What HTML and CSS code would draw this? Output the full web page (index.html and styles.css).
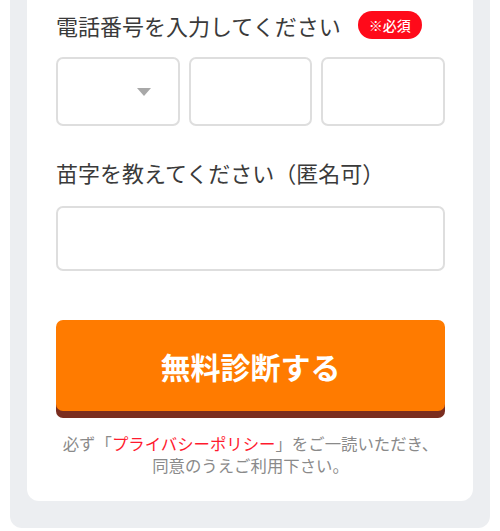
FILE: index.html
```html
<!DOCTYPE html>
<html lang="ja">
<head>
    <meta charset="UTF-8">
    <title>無料診断</title>
    <link rel="stylesheet" href="styles.css">
</head>
<body>
<div class="panel">
    <form class="card">
        <div class="label">
            <span>電話番号を入力してください</span>
            <em class="must">※必須</em>
        </div>
        <div class="tel">
            <div class="field select"><i class="arrow"></i></div>
            <div class="field"></div>
            <div class="field"></div>
        </div>

        <div class="label label-2">
            <span>苗字を教えてください（匿名可）</span>
        </div>
        <div class="field name"></div>

        <button type="button" class="submit">無料診断する</button>

        <p class="note">必ず「<a href="#">プライバシーポリシー</a>」をご一読いただき、<br>同意のうえご利用下さい。</p>
    </form>
</div>
</body>
</html>
```

FILE: styles.css
```css
* {
    margin: 0;
    padding: 0;
    box-sizing: border-box;
}

body {
    background: #fff;
    font-family: "Noto Sans CJK JP", "Noto Sans", sans-serif;
    color: #333;
}

.panel {
    margin: 0 10px;
    padding: 0 17px 27px;
    background: #eceef1;
    border-radius: 0 0 12px 12px;
}

.card {
    background: #fff;
    padding: 8px 28px 25px 29px;
    border-radius: 0 0 12px 12px;
}

.label {
    display: flex;
    align-items: center;
    height: 34px;
    font-size: 22px;
    line-height: 34px;
    color: #3a3a3a;
}

.label-2 {
    margin-top: 29px;
}

.must {
    font-style: normal;
    font-weight: 500;
    margin-left: 17px;
    width: 64px;
    height: 28px;
    line-height: 28px;
    border-radius: 14px;
    background: #ff0a1a;
    color: #fff;
    font-size: 14px;
    text-align: center;
}

.tel {
    display: grid;
    grid-template-columns: 1fr 1fr 1fr;
    gap: 9px;
    margin-top: 15px;
}

.field {
    height: 69px;
    border: 2px solid #dedede;
    border-radius: 7px;
    background: #fff;
}

.select {
    display: flex;
    align-items: center;
    justify-content: flex-end;
    padding-right: 27px;
}

.arrow {
    width: 0;
    height: 0;
    border-left: 7px solid transparent;
    border-right: 7px solid transparent;
    border-top: 8px solid #a8a8a8;
}

.name {
    height: 65px;
    margin-top: 17px;
}

.submit {
    display: block;
    width: 100%;
    height: 91px;
    margin-top: 49px;
    border: 0;
    border-radius: 7px;
    background: #ff7b00;
    box-shadow: 0 7px 0 #7a2d1f;
    color: #fff;
    font-family: inherit;
    font-size: 30px;
    font-weight: bold;
}

.note {
    margin-top: 21px;
    font-size: 16.4px;
    line-height: 22px;
    color: #8a8a8a;
    text-align: center;
}

.note a {
    color: #ff1a2e;
    text-decoration: none;
}
```
